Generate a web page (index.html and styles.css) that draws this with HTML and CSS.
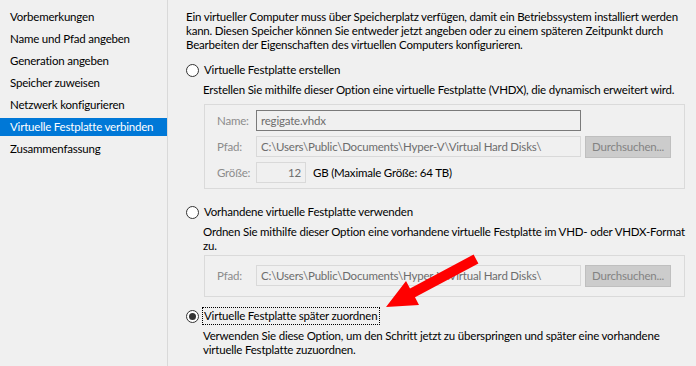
FILE: index.html
```html
<!DOCTYPE html>
<html lang="de">
<head>
<meta charset="utf-8">
<title>Virtuelle Festplatte verbinden</title>
<link rel="stylesheet" href="styles.css">
</head>
<body>
<div class="wizard">
  <nav class="nav">
    <div class="nav-item">Vorbemerkungen</div>
    <div class="nav-item">Name und Pfad angeben</div>
    <div class="nav-item">Generation angeben</div>
    <div class="nav-item">Speicher zuweisen</div>
    <div class="nav-item">Netzwerk konfigurieren</div>
    <div class="nav-item selected">Virtuelle Festplatte verbinden</div>
    <div class="nav-item">Zusammenfassung</div>
  </nav>
  <main class="content">
    <p class="intro">Ein virtueller Computer muss über Speicherplatz verfügen, damit ein Betriebssystem installiert werden<br>kann. Diesen Speicher können Sie entweder jetzt angeben oder zu einem späteren Zeitpunkt durch<br>Bearbeiten der Eigenschaften des virtuellen Computers konfigurieren.</p>

    <div class="option opt1">
      <span class="radio"></span><span class="opt-label">Virtuelle Festplatte erstellen</span>
    </div>
    <p class="desc desc1">Erstellen Sie mithilfe dieser Option eine virtuelle Festplatte (VHDX), die dynamisch erweitert wird.</p>
    <div class="group group1">
      <div class="field">
        <span class="flabel">Name:</span>
        <span class="input input-active">regigate.vhdx</span>
      </div>
      <div class="field">
        <span class="flabel">Pfad:</span>
        <span class="input">C:\Users\Public\Documents\Hyper-V\Virtual Hard Disks\</span>
        <span class="btn">Durchsuchen...</span>
      </div>
      <div class="field">
        <span class="flabel">Größe:</span>
        <span class="input input-num">12</span>
        <span class="unit">GB (Maximale Größe: 64 TB)</span>
      </div>
    </div>

    <div class="option opt2">
      <span class="radio"></span><span class="opt-label">Vorhandene virtuelle Festplatte verwenden</span>
    </div>
    <p class="desc desc2">Ordnen Sie mithilfe dieser Option eine vorhandene virtuelle Festplatte im VHD- oder VHDX-Format<br>zu.</p>
    <div class="group group2">
      <div class="field">
        <span class="flabel">Pfad:</span>
        <span class="input">C:\Users\Public\Documents\Hyper-V\Virtual Hard Disks\</span>
        <span class="btn">Durchsuchen...</span>
      </div>
    </div>

    <div class="option opt3">
      <span class="radio checked"></span><span class="opt-label focus">Virtuelle Festplatte später zuordnen</span>
    </div>
    <p class="desc desc3">Verwenden Sie diese Option, um den Schritt jetzt zu überspringen und später eine vorhandene<br>virtuelle Festplatte zuzuordnen.</p>
  </main>
</div>
<svg class="arrow" width="696" height="366" viewBox="0 0 696 366" aria-hidden="true">
  <polygon points="386,307 406,281 410,288.5 473.6,254.6 478.4,263.4 415,297.3 419,305" fill="#ff0000"/>
</svg>
</body>
</html>
```

FILE: styles.css
```css
html, body {
  margin: 0;
  padding: 0;
}
body {
  width: 696px;
  height: 366px;
  overflow: hidden;
  background: #f0f0f0;
  font-family: Lato, "Liberation Sans", sans-serif;
  font-size: 11.5px;
  letter-spacing: -0.2px;
  color: #000;
  position: relative;
}
.wizard {
  display: flex;
  height: 366px;
}
.nav {
  width: 167px;
  border-right: 1px solid #d9d9d9;
  padding-top: 8px;
  display: flex;
  flex-direction: column;
  gap: 4px;
  flex-shrink: 0;
}
.nav-item {
  height: 18px;
  line-height: 18px;
  padding-left: 10px;
  white-space: nowrap;
}
.nav-item.selected {
  background: #0078d7;
  color: #fff;
}
.content {
  flex: 1;
  padding: 10px 0 0 18px;
  display: flex;
  flex-direction: column;
  white-space: nowrap;
}
p {
  margin: 0;
}
.intro {
  line-height: 14px;
}
.option {
  display: flex;
  align-items: center;
  height: 16px;
}
.opt1 { margin-top: 10px; }
.opt2 { margin-top: 15px; }
.opt3 { margin-top: 11px; }
.radio {
  width: 11px;
  height: 11px;
  border: 1px solid #333;
  border-radius: 50%;
  background: #fff;
  margin-right: 4px;
  display: flex;
  align-items: center;
  justify-content: center;
  flex-shrink: 0;
}
.radio.checked::after {
  content: "";
  width: 7px;
  height: 7px;
  border-radius: 50%;
  background: #333;
}
.opt-label {
  line-height: 14px;
  padding: 0 1px;
}
.opt-label.focus {
  outline: 1px dotted #000;
  padding: 1px 2px 1px 1px;
}
.desc {
  margin-left: 17px;
  margin-top: 5px;
  line-height: 14px;
}
.group {
  margin-left: 18px;
  margin-top: 7px;
  width: 481px;
  border: 1px solid #dadada;
  display: flex;
  flex-direction: column;
  gap: 5px;
  padding: 5px 0 5px 12px;
  box-sizing: border-box;
}
.group1 { height: 85px; }
.group2 { height: 42px; padding-top: 9px; margin-top: 2px; }
.field {
  display: flex;
  align-items: center;
  height: 21px;
}
.flabel {
  width: 39px;
  color: #8c8c8c;
}
.input {
  box-sizing: border-box;
  width: 325px;
  height: 21px;
  border: 1px solid #d9d9d9;
  padding: 0 4px;
  line-height: 19px;
  color: #6d6d6d;
  white-space: nowrap;
  overflow: hidden;
}
.input-active {
  border-color: #7a7a7a;
}
.input-num {
  width: 50px;
  text-align: right;
}
.unit {
  margin-left: 7px;
}
.btn {
  box-sizing: border-box;
  margin-left: 4px;
  width: 86px;
  height: 22px;
  line-height: 20px;
  background: #cccccc;
  border: 1px solid #bfbfbf;
  color: #838383;
  text-align: center;
}
.arrow {
  position: absolute;
  left: 0;
  top: 0;
  pointer-events: none;
}
```
